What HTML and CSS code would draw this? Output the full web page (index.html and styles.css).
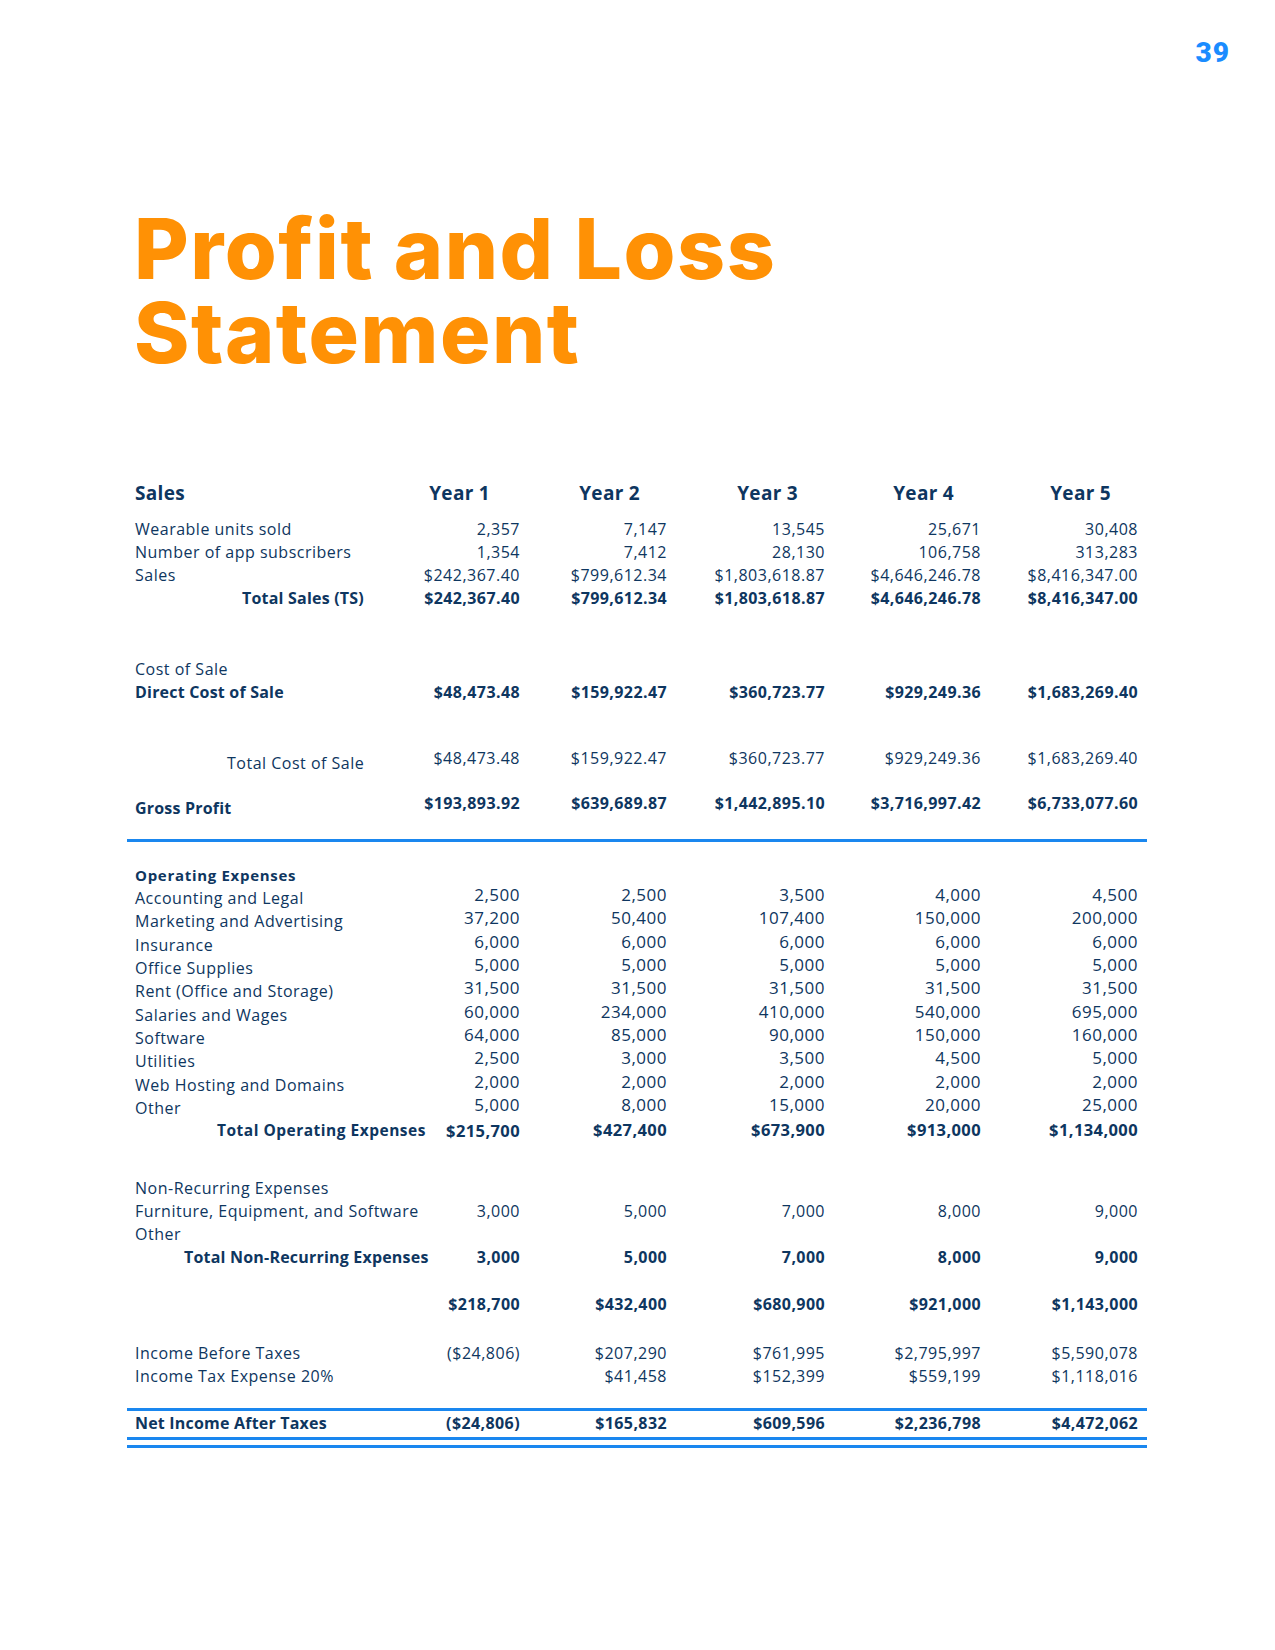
FILE: index.html
```html
<!DOCTYPE html>
<html lang="en">
<head>
<meta charset="utf-8">
<title>Profit and Loss Statement</title>
<link rel="stylesheet" href="styles.css">
</head>
<body>
<div class="page">
  <div class="pagenum">39</div>
  <h1 class="title">Profit and Loss<br>Statement</h1>

  <div class="pl">
    <div class="row head">
      <div class="lbl">Sales</div>
      <div class="yr yr1">Year 1</div><div class="yr">Year 2</div><div class="yr">Year 3</div><div class="yr">Year 4</div><div class="yr">Year 5</div>
    </div>
    <div class="row">
      <div class="lbl">Wearable units sold</div>
      <div class="v">2,357</div><div class="v">7,147</div><div class="v">13,545</div><div class="v">25,671</div><div class="v">30,408</div>
    </div>
    <div class="row">
      <div class="lbl">Number of app subscribers</div>
      <div class="v">1,354</div><div class="v">7,412</div><div class="v">28,130</div><div class="v">106,758</div><div class="v">313,283</div>
    </div>
    <div class="row">
      <div class="lbl">Sales</div>
      <div class="v">$242,367.40</div><div class="v">$799,612.34</div><div class="v">$1,803,618.87</div><div class="v">$4,646,246.78</div><div class="v">$8,416,347.00</div>
    </div>
    <div class="row bold">
      <div class="lbl ind-ts">Total Sales (TS)</div>
      <div class="v">$242,367.40</div><div class="v">$799,612.34</div><div class="v">$1,803,618.87</div><div class="v">$4,646,246.78</div><div class="v">$8,416,347.00</div>
    </div>

    <div class="row gap-cos">
      <div class="lbl">Cost of Sale</div>
    </div>
    <div class="row bold">
      <div class="lbl">Direct Cost of Sale</div>
      <div class="v">$48,473.48</div><div class="v">$159,922.47</div><div class="v">$360,723.77</div><div class="v">$929,249.36</div><div class="v">$1,683,269.40</div>
    </div>

    <div class="row split5 gap-tcos">
      <div class="lbl ind-tcos">Total Cost of Sale</div>
      <div class="v">$48,473.48</div><div class="v">$159,922.47</div><div class="v">$360,723.77</div><div class="v">$929,249.36</div><div class="v">$1,683,269.40</div>
    </div>
    <div class="row split5 bold gap-gp">
      <div class="lbl">Gross Profit</div>
      <div class="v">$193,893.92</div><div class="v">$639,689.87</div><div class="v">$1,442,895.10</div><div class="v">$3,716,997.42</div><div class="v">$6,733,077.60</div>
    </div>

    <div class="rule rule-gp"></div>

    <div class="row ophead">
      <div class="lbl">Operating Expenses</div>
    </div>
    <div class="row op">
      <div class="lbl">Accounting and Legal</div>
      <div class="v">2,500</div><div class="v">2,500</div><div class="v">3,500</div><div class="v">4,000</div><div class="v">4,500</div>
    </div>
    <div class="row op">
      <div class="lbl">Marketing and Advertising</div>
      <div class="v">37,200</div><div class="v">50,400</div><div class="v">107,400</div><div class="v">150,000</div><div class="v">200,000</div>
    </div>
    <div class="row op">
      <div class="lbl">Insurance</div>
      <div class="v">6,000</div><div class="v">6,000</div><div class="v">6,000</div><div class="v">6,000</div><div class="v">6,000</div>
    </div>
    <div class="row op">
      <div class="lbl">Office Supplies</div>
      <div class="v">5,000</div><div class="v">5,000</div><div class="v">5,000</div><div class="v">5,000</div><div class="v">5,000</div>
    </div>
    <div class="row op">
      <div class="lbl">Rent (Office and Storage)</div>
      <div class="v">31,500</div><div class="v">31,500</div><div class="v">31,500</div><div class="v">31,500</div><div class="v">31,500</div>
    </div>
    <div class="row op">
      <div class="lbl">Salaries and Wages</div>
      <div class="v">60,000</div><div class="v">234,000</div><div class="v">410,000</div><div class="v">540,000</div><div class="v">695,000</div>
    </div>
    <div class="row op">
      <div class="lbl">Software</div>
      <div class="v">64,000</div><div class="v">85,000</div><div class="v">90,000</div><div class="v">150,000</div><div class="v">160,000</div>
    </div>
    <div class="row op">
      <div class="lbl">Utilities</div>
      <div class="v">2,500</div><div class="v">3,000</div><div class="v">3,500</div><div class="v">4,500</div><div class="v">5,000</div>
    </div>
    <div class="row op">
      <div class="lbl">Web Hosting and Domains</div>
      <div class="v">2,000</div><div class="v">2,000</div><div class="v">2,000</div><div class="v">2,000</div><div class="v">2,000</div>
    </div>
    <div class="row op">
      <div class="lbl">Other</div>
      <div class="v">5,000</div><div class="v">8,000</div><div class="v">15,000</div><div class="v">20,000</div><div class="v">25,000</div>
    </div>
    <div class="row bold big">
      <div class="lbl ind-top small">Total Operating Expenses</div>
      <div class="v low">$215,700</div><div class="v">$427,400</div><div class="v">$673,900</div><div class="v">$913,000</div><div class="v">$1,134,000</div>
    </div>

    <div class="row gap-nr">
      <div class="lbl">Non-Recurring Expenses</div>
    </div>
    <div class="row">
      <div class="lbl">Furniture, Equipment, and Software</div>
      <div class="v">3,000</div><div class="v">5,000</div><div class="v">7,000</div><div class="v">8,000</div><div class="v">9,000</div>
    </div>
    <div class="row">
      <div class="lbl">Other</div>
    </div>
    <div class="row bold">
      <div class="lbl ind-tnr">Total Non-Recurring Expenses</div>
      <div class="v">3,000</div><div class="v">5,000</div><div class="v">7,000</div><div class="v">8,000</div><div class="v">9,000</div>
    </div>

    <div class="row bold gap-sub">
      <div class="lbl"></div>
      <div class="v">$218,700</div><div class="v">$432,400</div><div class="v">$680,900</div><div class="v">$921,000</div><div class="v">$1,143,000</div>
    </div>

    <div class="row gap-ibt">
      <div class="lbl">Income Before Taxes</div>
      <div class="v">($24,806)</div><div class="v">$207,290</div><div class="v">$761,995</div><div class="v">$2,795,997</div><div class="v">$5,590,078</div>
    </div>
    <div class="row">
      <div class="lbl">Income Tax Expense 20%</div>
      <div class="v"></div><div class="v">$41,458</div><div class="v">$152,399</div><div class="v">$559,199</div><div class="v">$1,118,016</div>
    </div>

    <div class="rule rule-net"></div>
    <div class="row bold net">
      <div class="lbl">Net Income After Taxes</div>
      <div class="v">($24,806)</div><div class="v">$165,832</div><div class="v">$609,596</div><div class="v">$2,236,798</div><div class="v">$4,472,062</div>
    </div>
    <div class="rule rule-dbl1"></div>
    <div class="rule rule-dbl2"></div>
  </div>
</div>
</body>
</html>
```

FILE: styles.css
```css
html, body {
  margin: 0;
  padding: 0;
  background: #ffffff;
}

.page {
  width: 1275px;
  height: 1650px;
  box-sizing: border-box;
  padding-top: 36px;
  font-family: "Open Sans", "Lato", sans-serif;
  color: #0e3660;
}

.pagenum {
  display: flex;
  justify-content: flex-end;
  padding-right: 45px;
  font-family: "Roboto", "Inter", sans-serif;
  font-weight: 900;
  font-size: 28px;
  line-height: 34px;
  letter-spacing: 1px;
  color: #1a8cff;
}

.title {
  margin: 137px 0 0 134px;
  font-family: "Inter", "Lato", sans-serif;
  font-weight: 800;
  font-size: 84px;
  line-height: 84px;
  letter-spacing: 1.5px;
  color: #ff9105;
}

.pl {
  margin: 103px 0 0 127px;
  width: 1020px;
}

.row {
  display: grid;
  grid-template-columns: 296px 106px 147px 158px 156px 157px;
  height: 23px;
  align-items: center;
  font-size: 16px;
  line-height: 20px;
  white-space: nowrap;
}

.lbl {
  padding-left: 8px;
  letter-spacing: 0.5px;
}

.v {
  text-align: right;
  padding-right: 9px;
  letter-spacing: 0.5px;
}

.bold {
  font-weight: 700;
}
.bold .lbl { letter-spacing: 0.2px; }
.bold .v { letter-spacing: 0.4px; }

.head {
  height: 30px;
  margin-bottom: 9px;
  font-size: 19px;
  font-weight: 700;
}
.head .lbl { letter-spacing: 0.3px; }

.yr {
  text-align: right;
  padding-right: 36px;
  letter-spacing: 0.3px;
}
.yr1 { padding-right: 39px; }

.ind-ts { padding-left: 115px; }
.ind-tcos { padding-left: 100px; }
.ind-top { padding-left: 90px; }
.ind-tnr { padding-left: 57px; }

.bold .small { font-size: 15.5px; letter-spacing: 0.5px; }

.gap-cos { margin-top: 48px; }
.gap-tcos { margin-top: 44px; }
.gap-gp { margin-top: 18px; }
.gap-nr { margin-top: 35px; }
.gap-sub { margin-top: 24px; }
.gap-ibt { margin-top: 26px; }

.split5 {
  height: 27px;
}
.split5 .lbl { padding-top: 5px; }
.split5 .v { padding-bottom: 5px; }

.rule {
  height: 0;
  border-top: 3px solid #1a87ef;
}
.rule-gp { margin-top: 20px; }
.rule-net { margin-top: 21px; }
.rule-dbl1 { margin-top: 3px; }
.rule-dbl2 { margin-top: 5px; }

.ophead {
  height: 21px;
  margin-top: 22px;
  font-size: 15px;
  font-weight: 700;
}
.ophead .lbl { letter-spacing: 0.7px; }

.op {
  height: 23.33px;
}
.op .lbl { padding-top: 3px; }
.op .v { padding-bottom: 3px; font-size: 17px; }

.big .v { font-size: 16.5px; }
.low { padding-top: 2px; }
```
